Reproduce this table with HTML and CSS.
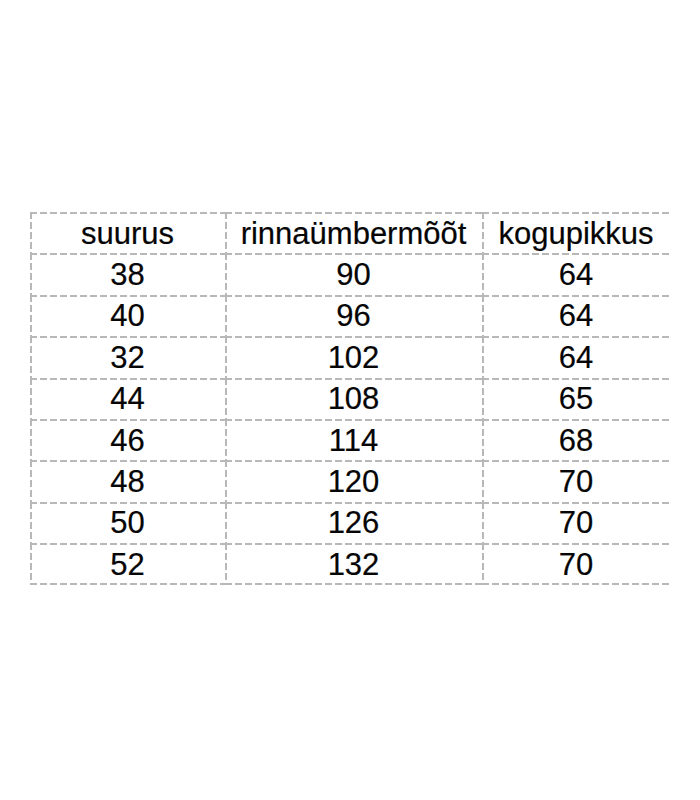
FILE: index.html
```html
<!DOCTYPE html>
<html lang="et">
<head>
<meta charset="utf-8">
<title>Suurustabel</title>
<link rel="stylesheet" href="styles.css">
</head>
<body>
<div class="page">
  <div class="table">
    <div class="cell">suurus</div><div class="cell">rinnaümbermõõt</div><div class="cell">kogupikkus</div>
    <div class="cell">38</div><div class="cell">90</div><div class="cell">64</div>
    <div class="cell">40</div><div class="cell">96</div><div class="cell">64</div>
    <div class="cell">32</div><div class="cell">102</div><div class="cell">64</div>
    <div class="cell">44</div><div class="cell">108</div><div class="cell">65</div>
    <div class="cell">46</div><div class="cell">114</div><div class="cell">68</div>
    <div class="cell">48</div><div class="cell">120</div><div class="cell">70</div>
    <div class="cell">50</div><div class="cell">126</div><div class="cell">70</div>
    <div class="cell last">52</div><div class="cell last">132</div><div class="cell last">70</div>
  </div>
</div>
</body>
</html>
```
FILE: styles.css
```css
html, body {
  margin: 0;
  background: #ffffff;
}
.page {
  width: 700px;
  height: 800px;
  padding: 212px 0 0 30px;
  box-sizing: border-box;
}
.table {
  display: grid;
  grid-template-columns: 195px 257px 188px;
  grid-auto-rows: 41.4px;
  font-family: "Liberation Sans", Arial, sans-serif;
  font-size: 31px;
  color: #050505;
  -webkit-text-stroke: 0.2px #050505;
}
.cell {
  display: flex;
  align-items: center;
  justify-content: center;
  padding-top: 2px;
  box-sizing: border-box;
  background-image:
    repeating-linear-gradient(to right, #b8b8b8 0 7px, transparent 7px 10px),
    repeating-linear-gradient(to bottom, #b8b8b8 0 7px, transparent 7px 10px);
  background-size: 100% 2px, 2px 100%;
  background-position: left top, left top;
  background-repeat: no-repeat;
}
.cell.last {
  background-image:
    repeating-linear-gradient(to right, #b8b8b8 0 7px, transparent 7px 10px),
    repeating-linear-gradient(to bottom, #b8b8b8 0 7px, transparent 7px 10px),
    repeating-linear-gradient(to right, #b8b8b8 0 7px, transparent 7px 10px);
  background-size: 100% 2px, 2px 100%, 100% 2px;
  background-position: left top, left top, left bottom;
}
```
